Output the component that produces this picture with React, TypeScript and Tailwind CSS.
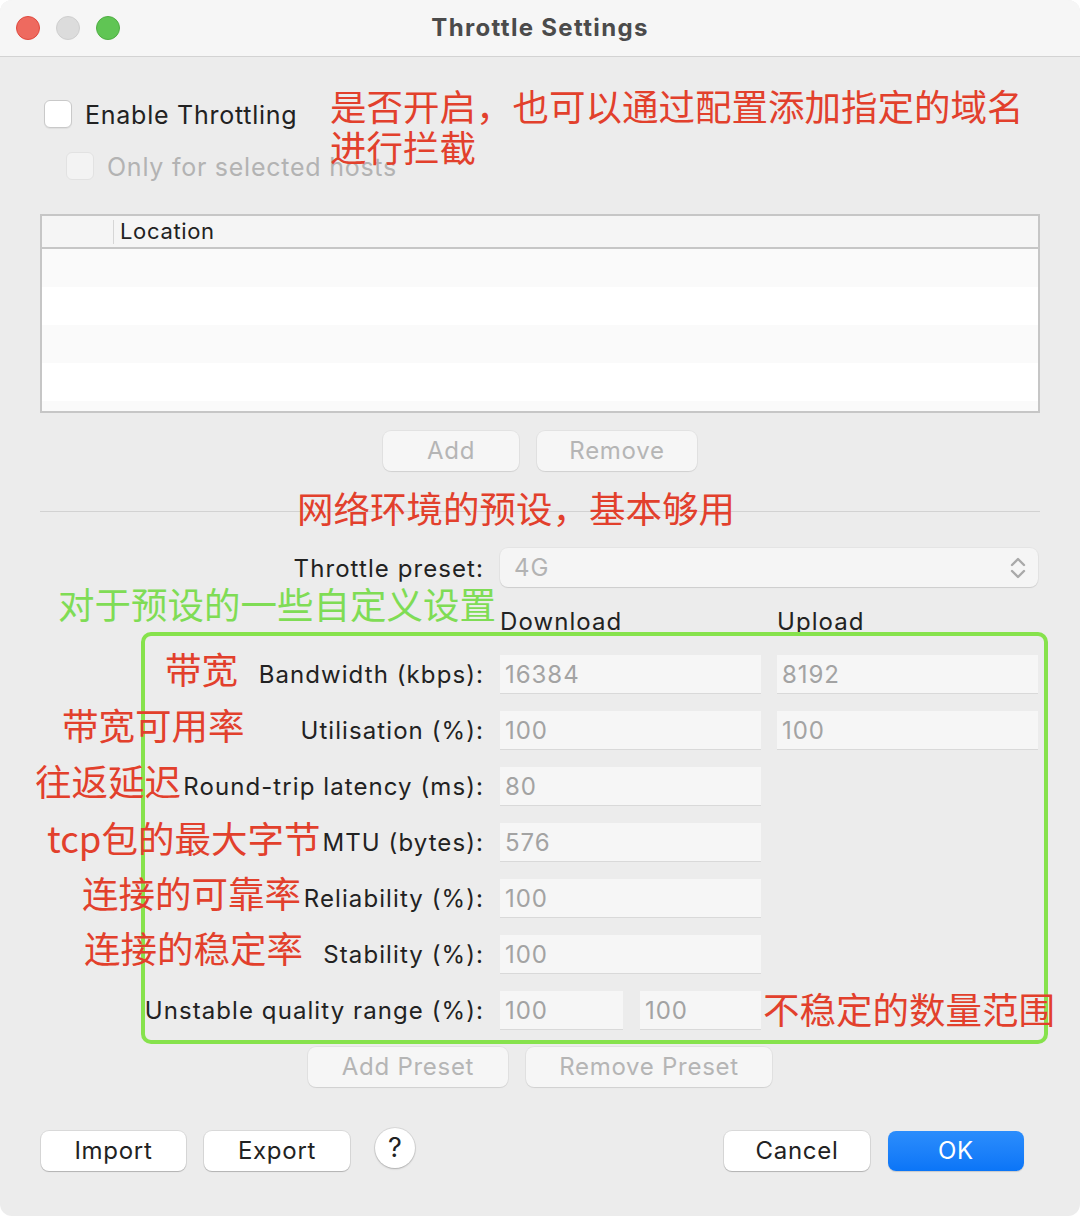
import React from "react";

const ui = { fontFamily: "Inter, 'Noto Sans', sans-serif" };
const cjk = { fontFamily: "'Noto Sans CJK SC', 'Noto Sans', sans-serif" };

function Checkbox({ disabled }: { disabled?: boolean }) {
  return (
    <div
      className={
        disabled
          ? "h-[28px] w-[28px] rounded-[6px] border border-[#e2e2e2] bg-[#f3f3f3]"
          : "h-[28px] w-[28px] rounded-[6px] border border-[#c9c9c9] bg-white shadow-[0_1px_1px_rgba(0,0,0,0.06)]"
      }
    />
  );
}

function Button({
  children,
  width,
  disabled,
  primary,
}: {
  children: React.ReactNode;
  width: string;
  disabled?: boolean;
  primary?: boolean;
}) {
  let cls =
    "flex h-[40px] items-center justify-center rounded-[8px] text-[24px] tracking-[0.03em] " + width;
  if (primary) {
    cls += " bg-gradient-to-b from-[#2b8dfc] to-[#0a75f7] text-white shadow-[0_1px_1px_rgba(0,0,0,0.15)]";
  } else if (disabled) {
    cls += " bg-[#f6f6f6] text-[#b5b5b5] shadow-[0_0_0_1px_rgba(0,0,0,0.04),0_1px_1px_rgba(0,0,0,0.08)]";
  } else {
    cls += " bg-white text-[#222] shadow-[0_0_0_1px_rgba(0,0,0,0.08),0_1px_1px_rgba(0,0,0,0.18)]";
  }
  return <div className={cls}>{children}</div>;
}

function Field({ value, className = "" }: { value: string; className?: string }) {
  return (
    <div
      className={
        "flex h-[38px] items-center bg-[#f6f6f6] pl-[5px] pt-[2px] text-[24px] tracking-[0.04em] text-[#a3a3a3] shadow-[0_1px_0_#d9d9d9] " +
        className
      }
    >
      {value}
    </div>
  );
}

function Label({ children }: { children: React.ReactNode }) {
  return (
    <div className="flex h-[38px] items-center justify-end whitespace-nowrap pt-[2px] text-[24px] tracking-[0.045em] text-[#222]">
      {children}
    </div>
  );
}

const Note = ({
  text,
  left,
  top,
  green,
}: {
  text: string;
  left: number;
  top: number;
  green?: boolean;
}) => (
  <div
    className={
      "absolute whitespace-nowrap text-[36.5px] leading-[36px] " +
      (green ? "text-[#7fdc55]" : "text-[#e2402c]")
    }
    style={{ ...cjk, left, top }}
  >
    {text}
  </div>
);

export default function App() {
  const rows: [string, string, string | null][] = [
    ["Bandwidth (kbps):", "16384", "8192"],
    ["Utilisation (%):", "100", "100"],
    ["Round-trip latency (ms):", "80", null],
    ["MTU (bytes):", "576", null],
    ["Reliability (%):", "100", null],
    ["Stability (%):", "100", null],
  ];

  return (
    <div className="h-[1216px] w-[1080px] bg-white" style={ui}>
      <div className="relative h-full w-full overflow-hidden rounded-[12px] bg-[#ececec]">
        {/* title bar */}
        <div className="relative flex h-[57px] items-center border-b border-[#d3d3d3] bg-[#f6f6f6] pl-[16px]">
          <div className="flex gap-[16px]">
            <div className="h-[24px] w-[24px] rounded-full border border-[#e0493e] bg-[#ee6a5f]" />
            <div className="h-[24px] w-[24px] rounded-full border border-[#cfcfcf] bg-[#dcdcdc]" />
            <div className="h-[24px] w-[24px] rounded-full border border-[#4fae43] bg-[#60c554]" />
          </div>
          <div className="absolute inset-x-0 top-0 flex h-[56px] items-center justify-center text-[24px] font-bold tracking-[0.055em] text-[#4b4b4b]">
            Throttle Settings
          </div>
        </div>

        <div className="px-[40px]">
          <div className="mt-[43px] flex h-[28px] items-center gap-[13px] pl-[4px]">
            <Checkbox />
            <span className="pt-[3px] text-[25px] tracking-[0.03em] text-[#222]">Enable Throttling</span>
          </div>
          <div className="mt-[24px] flex h-[28px] items-center gap-[13px] pl-[26px]">
            <Checkbox disabled />
            <span className="pt-[3px] text-[25px] tracking-[0.03em] text-[#b3b3b3]">Only for selected hosts</span>
          </div>

          {/* hosts table */}
          <div className="mt-[34px] h-[199px] w-[1000px] overflow-hidden border-2 border-[#c6c6c6] bg-white">
            <div className="flex h-[33px] items-center border-b-2 border-[#c6c6c6] bg-[#f5f5f5]">
              <div className="ml-[71px] h-[24px] w-px bg-[#d6d6d6]" />
              <span className="ml-[6px] text-[22px] tracking-[0.03em] text-[#222]">Location</span>
            </div>
            <div className="h-[38px] bg-[#fafafa]" />
            <div className="h-[38px] bg-white" />
            <div className="h-[38px] bg-[#fafafa]" />
            <div className="h-[38px] bg-white" />
            <div className="h-[38px] bg-[#fafafa]" />
          </div>

          <div className="mt-[18px] flex justify-center gap-[18px]">
            <Button width="w-[136px]" disabled>
              Add
            </Button>
            <Button width="w-[160px]" disabled>
              Remove
            </Button>
          </div>

          <div className="mt-[40px] h-px w-[1000px] bg-[#d2d2d2]" />

          {/* preset form */}
          <div className="mt-[36px] grid grid-cols-[444px_261px_261px] gap-x-[16px] gap-y-[18px]">
            <div className="flex h-[39px] items-center justify-end pt-[2px] text-[24px] tracking-[0.045em] text-[#222]">
              Throttle preset:
            </div>
            <div className="col-span-2 flex h-[39px] items-center justify-between rounded-[8px] bg-[#f5f5f5] pl-[14px] pr-[12px] text-[24px] tracking-[0.04em] text-[#b3b3b3] shadow-[0_0_0_1px_rgba(0,0,0,0.03),0_1px_1px_rgba(0,0,0,0.1)]">
              <span>4G</span>
              <svg width="16" height="24" viewBox="0 0 16 24" fill="none">
                <path d="M2 9l6-6 6 6" stroke="#a9a9a9" strokeWidth="2.4" strokeLinecap="round" strokeLinejoin="round" />
                <path d="M2 15l6 6 6-6" stroke="#a9a9a9" strokeWidth="2.4" strokeLinecap="round" strokeLinejoin="round" />
              </svg>
            </div>

            <div />
            <div className="flex h-[32px] items-end text-[24px] leading-[30px] tracking-[0.045em] text-[#222]">Download</div>
            <div className="flex h-[32px] items-end text-[24px] leading-[30px] tracking-[0.045em] text-[#222]">Upload</div>

            {rows.map(([label, down, up]) => (
              <React.Fragment key={label}>
                <Label>{label}</Label>
                <Field value={down} />
                {up ? <Field value={up} /> : <div />}
              </React.Fragment>
            ))}

            <Label>Unstable quality range (%):</Label>
            <div className="flex gap-[17px]">
              <Field value="100" className="w-[123px]" />
              <Field value="100" className="w-[121px]" />
            </div>
            <div />
          </div>

          <div className="mt-[18px] flex justify-center gap-[18px]">
            <Button width="w-[200px]" disabled>
              Add Preset
            </Button>
            <Button width="w-[246px]" disabled>
              Remove Preset
            </Button>
          </div>

          {/* footer */}
          <div className="mt-[44px] flex items-center">
            <div className="flex items-center gap-[18px] pl-[1px]">
              <Button width="w-[145px]">Import</Button>
              <Button width="w-[146px]">Export</Button>
              <div className="ml-[7px] -mt-[6px] flex h-[40px] w-[40px] items-center justify-center rounded-full bg-white text-[27px] text-[#222] shadow-[0_0_0_1px_rgba(0,0,0,0.08),0_1px_2px_rgba(0,0,0,0.2)]">
                ?
              </div>
            </div>
            <div className="ml-auto mr-[16px] flex gap-[18px]">
              <Button width="w-[146px]">Cancel</Button>
              <Button width="w-[136px]" primary>
                OK
              </Button>
            </div>
          </div>
        </div>

        {/* annotations */}
        <div className="absolute left-[141px] top-[632px] h-[412px] w-[907px] rounded-[10px] border-4 border-[#86e24c]" />
        <div
          className="absolute left-[330px] top-[85px] text-[36.5px] leading-[41px] text-[#e2402c]"
          style={cjk}
        >
          是否开启，也可以通过配置添加指定的域名
          <br />
          进行拦截
        </div>
        <Note text="网络环境的预设，基本够用" left={297} top={490} />
        <Note text="对于预设的一些自定义设置" left={58} top={586} green />
        <Note text="带宽" left={165} top={651} />
        <Note text="带宽可用率" left={62} top={707} />
        <Note text="往返延迟" left={35} top={763} />
        <Note text="tcp包的最大字节" left={47} top={820} />
        <Note text="连接的可靠率" left={82} top={875} />
        <Note text="连接的稳定率" left={84} top={930} />
        <Note text="不稳定的数量范围" left={763} top={991} />
      </div>
    </div>
  );
}
